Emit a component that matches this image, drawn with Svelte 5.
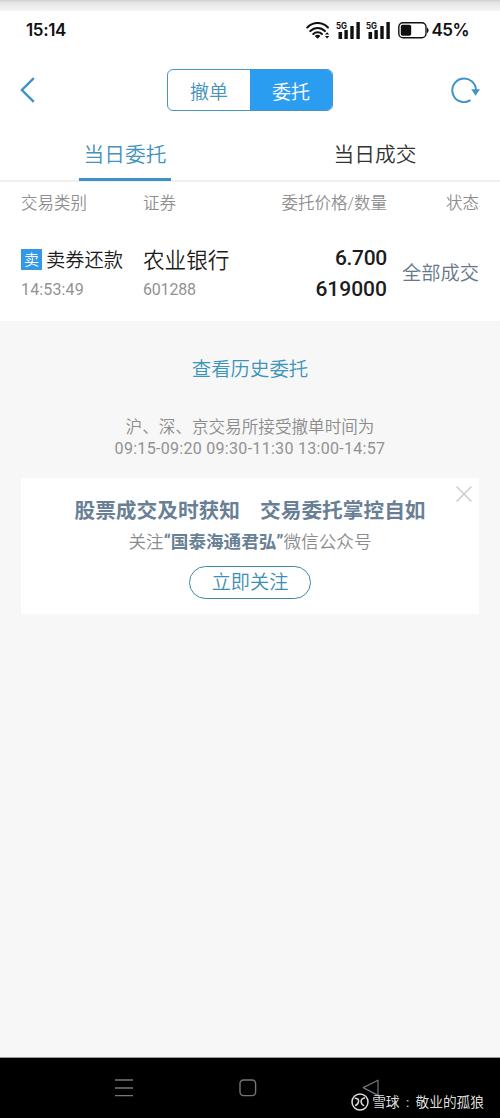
<script lang="ts">
	type Order = {
		side: string;
		kind: string;
		time: string;
		name: string;
		code: string;
		price: string;
		amount: string;
		status: string;
	};

	const tabs = ['当日委托', '当日成交'];
	const orders: Order[] = [
		{
			side: '卖',
			kind: '卖券还款',
			time: '14:53:49',
			name: '农业银行',
			code: '601288',
			price: '6.700',
			amount: '619000',
			status: '全部成交'
		}
	];

	let mode = $state('委托');
	let activeTab = $state(0);
	let showPromo = $state(true);
</script>

{#snippet signal()}
	<svg class="signal" width="25" height="18" viewBox="0 0 25 18">
		<text x="0" y="7.6" font-size="9" font-weight="700" textLength="11" lengthAdjust="spacingAndGlyphs">5G</text>
		<path d="M2.5 11h3.6v7H2.5zM8.4 9h3.4v9H8.4zM14.3 5h3.4v13h-3.4zM20.4 1h3.4v17h-3.4z" />
	</svg>
{/snippet}

<div class="screen">
	<div class="shade"></div>
	<div class="status">
		<span class="status__time">15:14</span>
		<div class="status__icons">
			<svg class="wifi" width="24" height="17" viewBox="0 0 24 17" fill="none" stroke="#111" stroke-width="2.1" stroke-linecap="round">
				<path d="M1.3 5.5C7.2-.5 16-.5 21.9 5.5" />
				<path d="M4.3 9.1c4.2-4.1 10.4-4.1 14.6 0" />
				<path d="M7.3 12c2.4-2.3 6.2-2.3 8.6 0" />
				<path d="M8.7 13.9q2.9-2.2 5.8 0L11.6 16.8z" fill="#111" stroke="none" />
				<path d="M18.9 12.6h4.4l-2.2-2.4zM18.9 14.1h4.4l-2.2 2.4z" fill="#111" stroke="none" />
			</svg>
			{@render signal()}
			{@render signal()}
			<svg class="battery" width="31" height="17" viewBox="0 0 31 17">
				<rect x=".8" y=".8" width="27.2" height="15" rx="4.2" fill="none" stroke="#111" stroke-width="1.4" />
				<rect x="2.8" y="2.8" width="10.4" height="11" rx="1.8" fill="#111" />
				<path d="M29 5.4q1.6.8 1.6 2.9T29 11.2z" fill="#111" />
			</svg>
			<span class="status__level">45%</span>
		</div>
	</div>

	<header class="nav">
		<button class="nav__btn" type="button" aria-label="返回">
			<svg width="15" height="26" viewBox="0 0 15 26" fill="none" stroke="#3d92ca" stroke-width="2.4">
				<path d="M13.8 1.2 1.9 13l11.9 11.8" />
			</svg>
		</button>
		<div class="segment">
			{#each ['撤单', '委托'] as item}
				<button class="segment__item" class:on={mode === item} type="button" onclick={() => (mode = item)}>{item}</button>
			{/each}
		</div>
		<button class="nav__btn" type="button" aria-label="刷新">
			<svg width="29" height="26" viewBox="0 0 29 26" fill="none" stroke="#4393c9" stroke-width="2">
				<path d="M19.5 23.2A11.8 11.8 0 1 1 24.9 13" />
				<path d="M20.2 12.2h8.8l-4.4 6.6z" fill="#4393c9" stroke="none" />
			</svg>
		</button>
	</header>

	<div class="tabs">
		{#each tabs as tab, i}
			<button class="tabs__item" class:active={activeTab === i} type="button" onclick={() => (activeTab = i)}>
				<span>{tab}</span>
			</button>
		{/each}
	</div>

	<section class="orders">
		<div class="row head">
			<span>交易类别</span>
			<span>证券</span>
			<span class="right">委托价格/数量</span>
			<span class="right">状态</span>
		</div>
		{#each orders as order}
			<div class="row order">
				<div>
					<div class="order__kind"><span class="badge">{order.side}</span>{order.kind}</div>
					<div class="order__sub">{order.time}</div>
				</div>
				<div>
					<div class="order__name">{order.name}</div>
					<div class="order__sub code">{order.code}</div>
				</div>
				<div class="order__nums right">
					<div class="price">{order.price}</div>
					<div>{order.amount}</div>
				</div>
				<div class="order__status right">{order.status}</div>
			</div>
		{/each}
	</section>

	<main class="body">
		<button class="history" type="button">查看历史委托</button>
		<p class="hint">沪、深、京交易所接受撤单时间为</p>
		<p class="hint hours">09:15-09:20 09:30-11:30 13:00-14:57</p>

		{#if showPromo}
			<div class="promo">
				<button class="promo__close" type="button" aria-label="关闭" onclick={() => (showPromo = false)}>
					<svg width="16" height="16" viewBox="0 0 16 16" stroke="#c6c6c6" stroke-width="1.2">
						<path d="M.5.5l15 15M15.5.5l-15 15" />
					</svg>
				</button>
				<div class="promo__title"><span>股票成交及时获知</span><span>交易委托掌控自如</span></div>
				<div class="promo__text">关注<b>“国泰海通君弘”</b>微信公众号</div>
				<button class="promo__follow" type="button">立即关注</button>
			</div>
		{/if}
	</main>

	<footer class="sysbar">
		<svg class="sysbar__menu" width="18" height="18" viewBox="0 0 18 18" stroke="#777" stroke-width="1.4">
			<path d="M0 1h18M0 9h18M0 16.6h18" />
		</svg>
		<svg class="sysbar__home" width="18" height="18" viewBox="0 0 18 18" fill="none" stroke="#777" stroke-width="1.4">
			<rect x="1" y="1" width="15.6" height="15.6" rx="3.5" />
		</svg>
		<svg class="sysbar__back" width="18" height="18" viewBox="0 0 18 18" fill="none" stroke="#777" stroke-width="1.2">
			<path d="M16 1.2v15.2L1.2 8.6z" stroke-linejoin="round" />
		</svg>
		<div class="mark">
			<svg width="18" height="18" viewBox="0 0 18 18" fill="none" stroke="#ddd" stroke-width="1.5">
				<circle cx="9" cy="9" r="8" />
				<path d="M3.8 5.2q4.2.2 3.8 3.2t-3.4 4.4M14 4.8q-4 .8-3.9 3.8t3 4" />
			</svg>
			<span>雪球<em>:</em>敬业的孤狼</span>
		</div>
	</footer>
</div>

<style>
	:global(body) {
		margin: 0;
	}

	.screen {
		display: flex;
		flex-direction: column;
		width: 500px;
		height: 1118px;
		overflow: hidden;
		background: #f7f7f7;
		color: #1c1c1c;
		font-family: Roboto, 'Noto Sans CJK SC', sans-serif;
		font-weight: 350;
	}

	button {
		margin: 0;
		padding: 0;
		border: 0;
		background: none;
		font: inherit;
		color: inherit;
		cursor: pointer;
	}

	svg {
		display: block;
		flex: none;
	}

	.shade {
		height: 11px;
		background: linear-gradient(#cfcfcf, #e6e6e6 25%, #f5f5f5);
	}

	.status {
		display: flex;
		justify-content: space-between;
		align-items: center;
		height: 38px;
		padding: 0 31px 0 26px;
		background: #fff;
		color: #111;
		font-family: Inter, sans-serif;
		font-weight: 600;
	}

	.status__time {
		font-size: 17px;
		letter-spacing: -0.35px;
	}

	.status__icons {
		display: flex;
		align-items: center;
	}

	.wifi {
		margin-right: 6px;
	}

	.signal {
		margin-right: 5px;
		fill: #111;
	}

	.battery {
		margin: 0 2px 0 2px;
	}

	.status__level {
		font-size: 17px;
		letter-spacing: -0.5px;
	}

	.nav {
		display: flex;
		justify-content: space-between;
		align-items: center;
		height: 82px;
		padding: 0 20px;
		background: #fff;
	}

	.nav__btn {
		display: flex;
		width: 29px;
	}

	.segment {
		display: flex;
		box-sizing: border-box;
		width: 166px;
		height: 42px;
		border: 1.5px solid #4795c7;
		border-radius: 6px;
		overflow: hidden;
	}

	.segment__item {
		flex: 1;
		color: #4592bd;
		font-size: 19px;
	}

	.segment__item.on {
		background: #2b9df0;
		color: #fff;
	}

	.tabs {
		display: flex;
		height: 49px;
		border-bottom: 2px solid #f0f0f0;
		background: #fff;
	}

	.tabs__item {
		display: flex;
		justify-content: center;
		flex: 1;
		height: 50px;
		color: #333;
		font-size: 20.7px;
	}

	.tabs__item span {
		box-sizing: border-box;
		width: 92px;
		height: 50px;
		line-height: 48px;
		white-space: nowrap;
		text-align: center;
	}

	.tabs__item.active span {
		border-bottom: 3px solid #3d92c8;
		color: #4592bd;
	}

	.orders {
		height: 139px;
		background: #fff;
	}

	.row {
		display: grid;
		grid-template-columns: 122px 120px 124px 92px;
		padding: 0 21px;
	}

	.right {
		text-align: right;
	}

	.head {
		height: 60px;
		line-height: 44px;
		color: #8f8f8f;
		font-size: 16.5px;
	}

	.order {
		align-items: start;
	}

	.order__kind,
	.order__name {
		display: flex;
		align-items: center;
		height: 34px;
		font-size: 19.3px;
		white-space: nowrap;
	}

	.order__name {
		align-items: flex-start;
		font-size: 21.6px;
		line-height: 37px;
	}

	.badge {
		width: 21px;
		height: 21px;
		margin-right: 4px;
		background: #3399e6;
		color: #fff;
		font-size: 15px;
		line-height: 22px;
		text-align: center;
	}

	.order__sub {
		color: #929292;
		font-size: 16px;
		font-weight: 400;
		letter-spacing: 0.15px;
		line-height: 28px;
	}

	.order__sub.code {
		letter-spacing: -0.2px;
	}

	.order__nums {
		padding-top: 1px;
		font-size: 21px;
		font-weight: 500;
		line-height: 31px;
	}

	.price {
		letter-spacing: -0.3px;
	}

	.order__status {
		color: #677789;
		font-size: 19.3px;
		line-height: 64px;
	}

	.body {
		display: flex;
		flex-direction: column;
		align-items: center;
		flex: 1;
		padding: 31px 21px 0;
	}

	.history {
		height: 31px;
		color: #3a94bb;
		font-size: 19.4px;
		line-height: 35px;
	}

	.hint {
		height: 22px;
		margin: 32px 0 0;
		color: #8c8c8c;
		font-size: 16.6px;
		line-height: 26px;
	}

	.hours {
		margin: 0;
		color: #929292;
		font-size: 16px;
		font-weight: 400;
		letter-spacing: 0.3px;
		line-height: 23px;
	}

	.promo {
		position: relative;
		display: flex;
		flex-direction: column;
		align-items: center;
		align-self: stretch;
		height: 136px;
		margin-top: 19px;
		background: #fff;
	}

	.promo__close {
		position: absolute;
		top: 8px;
		right: 7px;
	}

	.promo__title {
		display: flex;
		gap: 20px;
		margin-top: 18px;
		color: #697f95;
		font-size: 20.7px;
		font-weight: 700;
		line-height: 30px;
	}

	.promo__text {
		height: 30px;
		color: #8c8c8c;
		font-size: 17.6px;
		line-height: 32px;
	}

	.promo__text b {
		color: #697f95;
		font-weight: 700;
	}

	.promo__follow {
		box-sizing: border-box;
		width: 122px;
		height: 33px;
		margin-top: 10px;
		border: 1.5px solid #3b8ba6;
		border-radius: 17px;
		color: #3b8fb2;
		font-size: 19.2px;
		line-height: 32px;
	}

	.sysbar {
		position: relative;
		display: flex;
		box-sizing: border-box;
		height: 61px;
		padding: 21px 120px 0 115px;
		border-top: 1px solid #999;
		background: #000;
	}

	.sysbar__home {
		margin-left: 106px;
	}

	.sysbar__back {
		margin-left: 105px;
	}

	/* watermark lies over the system bar */
	.mark {
		position: absolute;
		right: 16px;
		bottom: 5px;
		display: flex;
		align-items: center;
		gap: 3px;
		color: #ddd;
		font-size: 13.7px;
		font-weight: 400;
		line-height: 22px;
		white-space: nowrap;
	}

	.mark em {
		display: inline-block;
		width: 16px;
		font-style: normal;
		text-align: center;
	}
</style>
